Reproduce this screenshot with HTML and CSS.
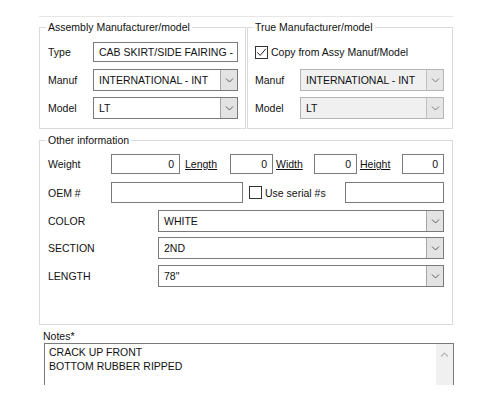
FILE: index.html
```html
<!DOCTYPE html>
<html>
<head>
<meta charset="utf-8">
<link rel="stylesheet" href="styles.css">
</head>
<body>
<div class="panel">
  <div class="top-row">
    <fieldset class="group assy">
      <legend>Assembly Manufacturer/model</legend>
      <div class="row r1"><span class="lbl">Type</span><div class="field grow">CAB SKIRT/SIDE FAIRING -</div></div>
      <div class="row r2"><span class="lbl">Manuf</span>
        <div class="combo grow"><span class="combo-text">INTERNATIONAL - INT</span><span class="combo-btn"><svg width="9" height="5" viewBox="0 0 9 5"><path d="M1 0.5 L4.5 4 L8 0.5" fill="none" stroke="#5a5a5a" stroke-width="1"/></svg></span></div>
      </div>
      <div class="row r3"><span class="lbl">Model</span>
        <div class="combo grow"><span class="combo-text">LT</span><span class="combo-btn"><svg width="9" height="5" viewBox="0 0 9 5"><path d="M1 0.5 L4.5 4 L8 0.5" fill="none" stroke="#5a5a5a" stroke-width="1"/></svg></span></div>
      </div>
    </fieldset>
    <fieldset class="group true">
      <legend>True Manufacturer/model</legend>
      <div class="row r1"><span class="check checked"><svg width="11" height="11" viewBox="0 0 11 11"><path d="M1.3 5.3 L4.2 8.4 L9.8 1.8" fill="none" stroke="#222" stroke-width="1"/></svg></span><span class="check-lbl">Copy from Assy Manuf/Model</span></div>
      <div class="row r2"><span class="lbl">Manuf</span>
        <div class="combo disabled grow"><span class="combo-text">INTERNATIONAL - INT</span><span class="combo-btn"><svg width="9" height="5" viewBox="0 0 9 5"><path d="M1 0.5 L4.5 4 L8 0.5" fill="none" stroke="#7a7a7a" stroke-width="1"/></svg></span></div>
      </div>
      <div class="row r3"><span class="lbl">Model</span>
        <div class="combo disabled grow"><span class="combo-text">LT</span><span class="combo-btn"><svg width="9" height="5" viewBox="0 0 9 5"><path d="M1 0.5 L4.5 4 L8 0.5" fill="none" stroke="#7a7a7a" stroke-width="1"/></svg></span></div>
      </div>
    </fieldset>
  </div>

  <fieldset class="group other">
    <legend>Other information</legend>
    <div class="row o1">
      <span class="lbl lbl-weight">Weight</span>
      <div class="field num w-weight">0</div>
      <span class="ulbl ul-length">Length</span>
      <div class="field num w-small">0</div>
      <span class="ulbl ul-width">Width</span>
      <div class="field num w-small">0</div>
      <span class="ulbl ul-height">Height</span>
      <div class="field num w-height">0</div>
    </div>
    <div class="row o2">
      <span class="lbl lbl-weight">OEM #</span>
      <div class="field w-oem"></div>
      <span class="check serial"></span><span class="check-lbl">Use serial #s</span>
      <div class="field w-serial"></div>
    </div>
    <div class="row o3">
      <span class="lbl lbl-wide">COLOR</span>
      <div class="combo grow"><span class="combo-text">WHITE</span><span class="combo-btn"><svg width="9" height="5" viewBox="0 0 9 5"><path d="M1 0.5 L4.5 4 L8 0.5" fill="none" stroke="#5a5a5a" stroke-width="1"/></svg></span></div>
    </div>
    <div class="row o4">
      <span class="lbl lbl-wide">SECTION</span>
      <div class="combo grow"><span class="combo-text">2ND</span><span class="combo-btn"><svg width="9" height="5" viewBox="0 0 9 5"><path d="M1 0.5 L4.5 4 L8 0.5" fill="none" stroke="#5a5a5a" stroke-width="1"/></svg></span></div>
    </div>
    <div class="row o5">
      <span class="lbl lbl-wide">LENGTH</span>
      <div class="combo grow"><span class="combo-text">78"</span><span class="combo-btn"><svg width="9" height="5" viewBox="0 0 9 5"><path d="M1 0.5 L4.5 4 L8 0.5" fill="none" stroke="#5a5a5a" stroke-width="1"/></svg></span></div>
    </div>
  </fieldset>

  <div class="notes">
    <div class="notes-lbl">Notes*</div>
    <div class="notes-box">
      <div class="notes-text">CRACK UP FRONT<br>BOTTOM RUBBER RIPPED</div>
      <div class="scrollbar"><svg width="9" height="5" viewBox="0 0 9 5"><path d="M1 4.5 L4.5 1 L8 4.5" fill="none" stroke="#b8b8b8" stroke-width="1.2"/></svg></div>
    </div>
  </div>
</div>
</body>
</html>
```
FILE: styles.css
```css
html, body {
  margin: 0;
  padding: 0;
  background: #ffffff;
}
body {
  font-family: "Liberation Sans", Arial, sans-serif;
  font-size: 10.5px;
  color: #111;
}
.panel {
  margin: 16px 0 0 39px;
  width: 414px;
  border-top: 1px solid #e6e6e6;
}
.top-row {
  display: flex;
  gap: 1px;
  margin-top: 3px;
}
.group {
  margin: 0;
  border: 1px solid #dadada;
  min-width: 0;
  box-sizing: border-box;
}
.group legend {
  line-height: 14px;
  padding: 0 2px;
  margin-left: -2px;
}
.assy {
  width: 207px;
  padding: 8px 7px 9px 8px;
}
.true {
  width: 206px;
  padding: 8px 8px 9px 7px;
}
.row {
  display: flex;
  align-items: center;
}
.r1 { height: 20px; }
.r2 { height: 22px; margin-top: 7px; }
.r3 { height: 22px; margin-top: 6px; }
.lbl {
  width: 45px;
  flex: none;
}
.grow { flex: 1; min-width: 0; }
.field {
  box-sizing: border-box;
  height: 100%;
  border: 1px solid #7a7a7a;
  background: #fff;
  padding: 0 5px;
  display: flex;
  align-items: center;
  white-space: nowrap;
  overflow: hidden;
}
.field.num { justify-content: flex-end; }
.combo {
  box-sizing: border-box;
  height: 100%;
  display: flex;
  border: 1px solid #7a7a7a;
  background: #fff;
}
.combo-text {
  flex: 1;
  display: flex;
  align-items: center;
  padding-left: 5px;
  white-space: nowrap;
  overflow: hidden;
}
.combo-btn {
  width: 16px;
  flex: none;
  background: #e3e3e3;
  border-left: 1px solid #a8a8a8;
  display: flex;
  align-items: center;
  justify-content: center;
}
.combo.disabled {
  background: #f0f0f0;
  border-color: #b4b4b4;
}
.combo.disabled .combo-btn {
  background: #e6e6e6;
  border-left-color: #c0c0c0;
}
.check {
  box-sizing: border-box;
  width: 13px;
  height: 13px;
  border: 1px solid #333;
  background: #fff;
  flex: none;
  display: flex;
  align-items: center;
  justify-content: center;
}
.check-lbl {
  margin-left: 3px;
  white-space: nowrap;
}
.other {
  width: 414px;
  margin-top: 4px;
  padding: 7px 8px 37px 8px;
}
.o1 { height: 20px; }
.o2 { height: 21px; margin-top: 8px; }
.o3 { height: 22px; margin-top: 7px; }
.o4 { height: 22px; margin-top: 5px; }
.o5 { height: 22px; margin-top: 6px; }
.lbl-weight { width: 63px; }
.lbl-wide { width: 110px; }
.w-weight { width: 69px; flex: none; }
.w-small { width: 43px; flex: none; }
.w-height { width: 42px; flex: none; }
.w-oem { width: 132px; flex: none; }
.w-serial { width: 99px; flex: none; margin-left: auto; }
.ulbl {
  text-decoration: underline;
  flex: none;
}
.ul-length { width: 45px; margin-left: 5px; }
.ul-width { width: 38px; margin-left: 3px; }
.ul-height { width: 42px; margin-left: 3px; }
.serial { margin-left: 6px; }
.notes {
  margin-left: 4px;
  margin-top: 4px;
}
.notes-lbl {
  line-height: 14px;
}
.notes-box {
  margin-left: 1px;
  width: 410px;
  height: 42px;
  box-sizing: border-box;
  border: 1px solid #7a7a7a;
  border-bottom: none;
  display: flex;
}
.notes-text {
  flex: 1;
  padding: 1px 4px;
  line-height: 14px;
}
.scrollbar {
  width: 17px;
  background: #f0f0f0;
  display: flex;
  justify-content: center;
  align-items: flex-start;
  padding-top: 8px;
  box-sizing: border-box;
}
```
